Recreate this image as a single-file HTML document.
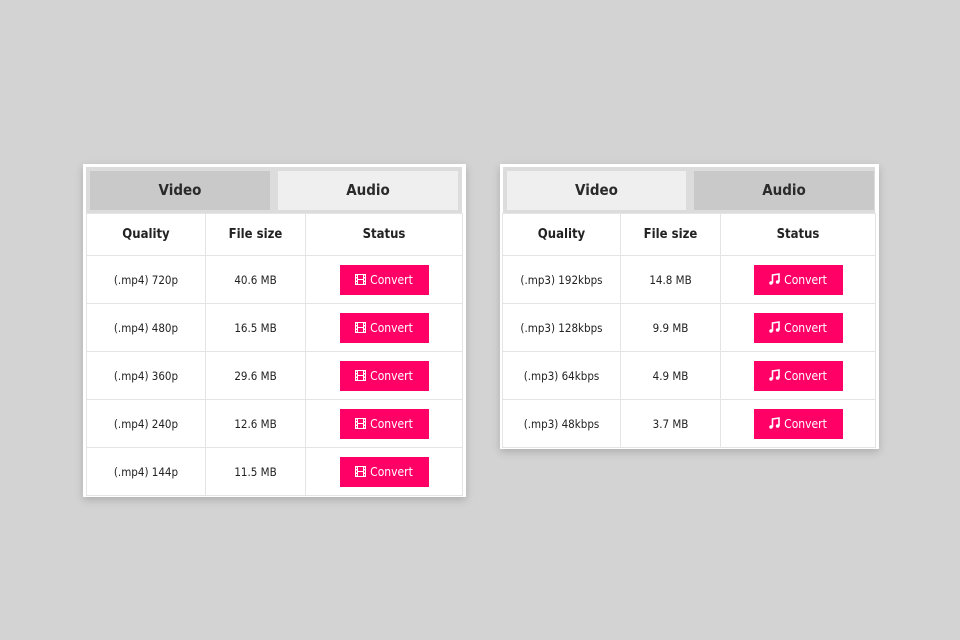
<!DOCTYPE html>
<html><head><meta charset="utf-8"><style>
body{margin:0;width:960px;height:640px;background:#d3d3d3;font-family:"DejaVu Sans","Liberation Sans",sans-serif;position:relative;overflow:hidden}
.panel{position:absolute;background:#fff;box-shadow:0 3px 8px rgba(0,0,0,.18)}
.tabs{position:absolute;background:#dcdcdc;left:3px;right:4px;top:3px;height:47px}
.tab{position:absolute;top:4px;height:39px;line-height:39px;text-align:center;font-weight:bold;font-size:15px;color:#2a2a2a;font-family:"DejaVu Sans Condensed","DejaVu Sans",sans-serif}
.on{background:#c9c9c9}.off{background:#efefef}
table{position:absolute;left:3px;top:49px;border-collapse:collapse;font-family:"DejaVu Sans Condensed","DejaVu Sans",sans-serif}
td{border:1px solid #e4e4e4;text-align:center;font-size:11.5px;color:#222;padding:0;height:47px}
tr.h td{height:41px;font-weight:bold;font-size:13px}
.btn{display:inline-block;width:89px;height:30px;line-height:30px;background:#ff0066;color:#fff;font-size:12px;vertical-align:middle}
.btn svg{vertical-align:-1px;margin-right:4px}
</style></head><body>
<div class="panel" style="left:83px;top:164px;width:383px;height:333px">
 <div class="tabs"><div class="tab on" style="left:4px;width:180px">Video</div><div class="tab off" style="left:192px;width:180px">Audio</div></div>
 <table style="width:377px">
  <colgroup><col style="width:119px"><col style="width:100px"><col></colgroup>
  <tr class="h"><td>Quality</td><td>File size</td><td>Status</td></tr>
  <tr><td>(.mp4) 720p</td><td>40.6 MB</td><td><span class="btn"><svg width="11" height="11" viewBox="0 0 11 11"><path fill="#fff" fill-rule="evenodd" d="M0 0H11V11H0ZM3 1V5H8V1ZM3 6V10H8V6ZM1 1.5H2V3H1ZM1 4.5H2V6.5H1ZM1 8H2V9.5H1ZM9 1.5H10V3H9ZM9 4.5H10V6.5H9ZM9 8H10V9.5H9Z"/></svg>Convert</span></td></tr>
  <tr><td>(.mp4) 480p</td><td>16.5 MB</td><td><span class="btn"><svg width="11" height="11" viewBox="0 0 11 11"><path fill="#fff" fill-rule="evenodd" d="M0 0H11V11H0ZM3 1V5H8V1ZM3 6V10H8V6ZM1 1.5H2V3H1ZM1 4.5H2V6.5H1ZM1 8H2V9.5H1ZM9 1.5H10V3H9ZM9 4.5H10V6.5H9ZM9 8H10V9.5H9Z"/></svg>Convert</span></td></tr>
  <tr><td>(.mp4) 360p</td><td>29.6 MB</td><td><span class="btn"><svg width="11" height="11" viewBox="0 0 11 11"><path fill="#fff" fill-rule="evenodd" d="M0 0H11V11H0ZM3 1V5H8V1ZM3 6V10H8V6ZM1 1.5H2V3H1ZM1 4.5H2V6.5H1ZM1 8H2V9.5H1ZM9 1.5H10V3H9ZM9 4.5H10V6.5H9ZM9 8H10V9.5H9Z"/></svg>Convert</span></td></tr>
  <tr><td>(.mp4) 240p</td><td>12.6 MB</td><td><span class="btn"><svg width="11" height="11" viewBox="0 0 11 11"><path fill="#fff" fill-rule="evenodd" d="M0 0H11V11H0ZM3 1V5H8V1ZM3 6V10H8V6ZM1 1.5H2V3H1ZM1 4.5H2V6.5H1ZM1 8H2V9.5H1ZM9 1.5H10V3H9ZM9 4.5H10V6.5H9ZM9 8H10V9.5H9Z"/></svg>Convert</span></td></tr>
  <tr><td>(.mp4) 144p</td><td>11.5 MB</td><td><span class="btn"><svg width="11" height="11" viewBox="0 0 11 11"><path fill="#fff" fill-rule="evenodd" d="M0 0H11V11H0ZM3 1V5H8V1ZM3 6V10H8V6ZM1 1.5H2V3H1ZM1 4.5H2V6.5H1ZM1 8H2V9.5H1ZM9 1.5H10V3H9ZM9 4.5H10V6.5H9ZM9 8H10V9.5H9Z"/></svg>Convert</span></td></tr>
 </table>
</div>
<div class="panel" style="left:500px;top:164px;width:379px;height:285px">
 <div class="tabs"><div class="tab off" style="left:4px;width:179px">Video</div><div class="tab on" style="left:191px;width:180px">Audio</div></div>
 <table style="width:374px;left:2px">
  <colgroup><col style="width:118px"><col style="width:100px"><col></colgroup>
  <tr class="h"><td>Quality</td><td>File size</td><td>Status</td></tr>
  <tr><td>(.mp3) 192kbps</td><td>14.8 MB</td><td><span class="btn"><svg width="11" height="12" viewBox="0 0 11 12"><path fill="none" stroke="#fff" stroke-width="1.6" d="M3.5 10V2L10 1V9"/><circle cx="2" cy="10" r="1.8" fill="#fff"/><circle cx="8.6" cy="9" r="1.8" fill="#fff"/></svg>Convert</span></td></tr>
  <tr><td>(.mp3) 128kbps</td><td>9.9 MB</td><td><span class="btn"><svg width="11" height="12" viewBox="0 0 11 12"><path fill="none" stroke="#fff" stroke-width="1.6" d="M3.5 10V2L10 1V9"/><circle cx="2" cy="10" r="1.8" fill="#fff"/><circle cx="8.6" cy="9" r="1.8" fill="#fff"/></svg>Convert</span></td></tr>
  <tr><td>(.mp3) 64kbps</td><td>4.9 MB</td><td><span class="btn"><svg width="11" height="12" viewBox="0 0 11 12"><path fill="none" stroke="#fff" stroke-width="1.6" d="M3.5 10V2L10 1V9"/><circle cx="2" cy="10" r="1.8" fill="#fff"/><circle cx="8.6" cy="9" r="1.8" fill="#fff"/></svg>Convert</span></td></tr>
  <tr><td>(.mp3) 48kbps</td><td>3.7 MB</td><td><span class="btn"><svg width="11" height="12" viewBox="0 0 11 12"><path fill="none" stroke="#fff" stroke-width="1.6" d="M3.5 10V2L10 1V9"/><circle cx="2" cy="10" r="1.8" fill="#fff"/><circle cx="8.6" cy="9" r="1.8" fill="#fff"/></svg>Convert</span></td></tr>
 </table>
</div>
</body></html>
